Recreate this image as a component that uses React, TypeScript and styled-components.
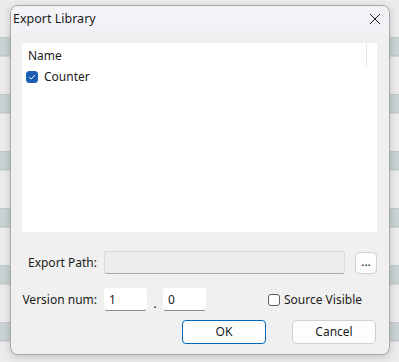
import styled, { createGlobalStyle } from "styled-components";

const GlobalStyle = createGlobalStyle`
  html, body {
    margin: 0;
    padding: 0;
  }
  body {
    width: 399px;
    height: 362px;
    overflow: hidden;
    font-family: "Noto Sans", "Liberation Sans", sans-serif;
    font-size: 12px;
    color: #1b1b1b;
    background-color: #ececec;
    background-image: repeating-linear-gradient(
      to bottom,
      #ececec 0px,
      #ececec 37px,
      #b9c2c2 37px,
      #c9d3d3 38px,
      #c9d3d3 55px,
      #b9c2c2 56px,
      #ececec 57px
    );
  }
`;

const Dialog = styled.div`
  margin: 5px 0 0 10px;
  width: 380px;
  height: 350px;
  box-sizing: border-box;
  border: 1px solid #a9a9a9;
  border-radius: 8px;
  background: #f0f0f0;
  box-shadow: 0 2px 8px rgba(0, 0, 0, 0.18);
  overflow: hidden;
  display: flex;
  flex-direction: column;
`;

const TitleBar = styled.div`
  height: 25px;
  background: #f3f2f7;
  display: flex;
  align-items: center;
  justify-content: space-between;
  padding: 0 7px 0 2px;
`;

const Title = styled.span`
  font-size: 12.5px;
  color: #1b1b1b;
`;

const CloseButton = styled.button`
  border: none;
  background: none;
  padding: 0;
  width: 14px;
  height: 14px;
  display: flex;
  align-items: center;
  justify-content: center;
  cursor: pointer;
`;

const Body = styled.div`
  flex: 1;
  display: flex;
  flex-direction: column;
  padding: 12px 12px 0 11px;
`;

const ListBox = styled.div`
  height: 189px;
  background: #ffffff;
  display: flex;
  flex-direction: column;
`;

const ListHeader = styled.div`
  height: 24px;
  display: flex;
  align-items: center;
  padding-left: 6px;
  width: 345px;
  box-sizing: border-box;
  border-right: 1px solid #e5e5e5;
`;

const ListRow = styled.label`
  display: flex;
  align-items: center;
  gap: 6px;
  height: 19px;
  padding-left: 4px;
`;

const CheckBox = styled.span<{ checked?: boolean }>`
  width: 12px;
  height: 12px;
  box-sizing: border-box;
  border-radius: 3px;
  display: inline-flex;
  align-items: center;
  justify-content: center;
  background: ${({ checked }) => (checked ? "#1a5fb4" : "#ffffff")};
  border: 1px solid ${({ checked }) => (checked ? "#1a5fb4" : "#5c5c5c")};
`;

const FormRow = styled.div<{ top: number }>`
  display: flex;
  align-items: center;
  margin-top: ${({ top }) => top}px;
`;

const Label = styled.span`
  width: 75px;
  text-align: right;
  margin-right: 7px;
  white-space: nowrap;
`;

const TextInput = styled.div<{ disabled?: boolean; width?: number }>`
  height: 23px;
  box-sizing: border-box;
  ${({ width }) => (width ? `width: ${width}px;` : "flex: 1;")}
  background: ${({ disabled }) => (disabled ? "#ededed" : "#ffffff")};
  border: 1px solid ${({ disabled }) => (disabled ? "#dadada" : "#ffffff")};
  border-bottom-color: ${({ disabled }) => (disabled ? "#a8a8a8" : "#8a8a8a")};
  border-radius: 3px;
  padding: 2px 6px 0 4px;
  display: flex;
  align-items: flex-start;
`;

const Dot = styled.span`
  width: 16px;
  text-align: center;
  align-self: flex-end;
  line-height: 10px;
  margin-bottom: 2px;
`;

const SmallButton = styled.button`
  margin-left: 10px;
  width: 22px;
  height: 22px;
  box-sizing: border-box;
  border: 1px solid #d0d0d0;
  border-radius: 4px;
  background: #fdfdfd;
  font-family: inherit;
  font-size: 12px;
  padding: 0 0 4px;
  color: #1b1b1b;
`;

const Spacer = styled.div`
  flex: 1;
`;

const CheckLabel = styled.label`
  display: flex;
  align-items: center;
  gap: 4px;
  margin-right: 15px;
`;

const ButtonRow = styled.div`
  display: flex;
  justify-content: flex-end;
  gap: 26px;
  margin-top: 9px;
  padding-right: 1px;
`;

const PushButton = styled.button<{ primary?: boolean }>`
  width: 84px;
  height: 24px;
  box-sizing: border-box;
  border-radius: 4px;
  background: #fdfdfd;
  border: 1px solid ${({ primary }) => (primary ? "#0067c0" : "#d0d0d0")};
  font-family: inherit;
  font-size: 12px;
  color: #1b1b1b;
  padding: 0 0 1px;
`;

export default function App() {
  return (
    <>
      <GlobalStyle />
      <Dialog>
        <TitleBar>
          <Title>Export Library</Title>
          <CloseButton aria-label="Close">
            <svg width="12" height="12" viewBox="0 0 12 12">
              <path d="M1 1 L11 11 M11 1 L1 11" stroke="#1b1b1b" strokeWidth="1" />
            </svg>
          </CloseButton>
        </TitleBar>
        <Body>
          <ListBox>
            <ListHeader>Name</ListHeader>
            <ListRow>
              <CheckBox checked>
                <svg width="8" height="8" viewBox="0 0 8 8">
                  <path d="M1.2 4.2 L3.2 6 L6.8 2" fill="none" stroke="#ffffff" strokeWidth="0.9" />
                </svg>
              </CheckBox>
              Counter
            </ListRow>
          </ListBox>
          <FormRow top={19}>
            <Label>Export Path:</Label>
            <TextInput disabled />
            <SmallButton>...</SmallButton>
          </FormRow>
          <FormRow top={14}>
            <Label>Version num:</Label>
            <TextInput width={43}>1</TextInput>
            <Dot>.</Dot>
            <TextInput width={43}>0</TextInput>
            <Spacer />
            <CheckLabel>
              <CheckBox />
              Source Visible
            </CheckLabel>
          </FormRow>
          <ButtonRow>
            <PushButton primary>OK</PushButton>
            <PushButton>Cancel</PushButton>
          </ButtonRow>
        </Body>
      </Dialog>
    </>
  );
}
